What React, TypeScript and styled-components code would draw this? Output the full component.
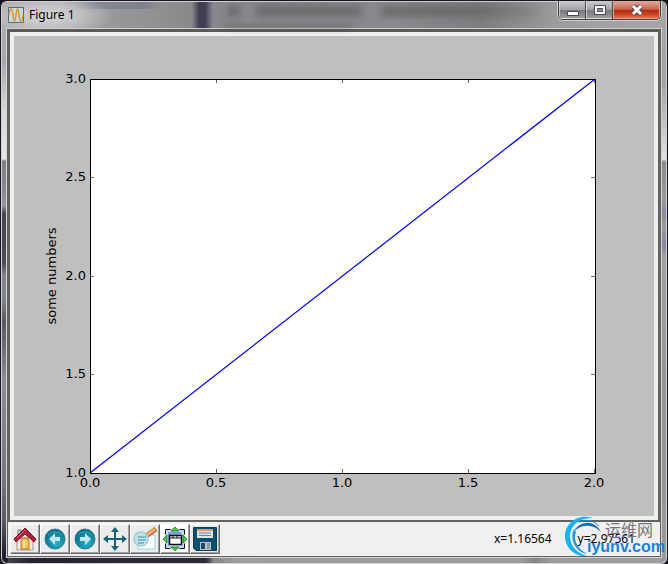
import React from "react";
import styled, { createGlobalStyle, css } from "styled-components";

const GlobalStyle = createGlobalStyle`
  * { box-sizing: border-box; }
  body { margin: 0; background: #15131c; font-family: "Noto Sans", "Noto Sans CJK SC", sans-serif; }
`;

const Window = styled.main`
  position: relative;
  display: flex;
  flex-direction: column;
  min-height: 100vh;
  padding: 0 5px 6px;
  border: 1px solid #17141d;
  border-radius: 7px;
  overflow: hidden;
  box-shadow: inset 0 0 0 1px #d4d4d6;
  background:
    linear-gradient(#b4b2b5, #a9a7ab 60px, #d9d6d8 110px, #e9e6e8 158px, #807e82 160px, #8d898e 190px,
      #9a969b 205px, #4b464b 212px, #504b50 262px, #84868e 275px, #7e828c 300px, #5a565b 320px,
      #8f8d92 380px, #77757a 480px, #5b5960 520px, #23222e 552px) left / 7px 100% no-repeat,
    linear-gradient(#aaa 0, #a3a3a3 80px, #c0c0c0 120px, #e4e4e4 158px, #8b8b8b 161px, #9a9a9a 200px,
      #8886a0 212px, #9c9c9c 225px, #8684a0 244px, #a0a0a0 255px, #959598 400px, #9a9a9a) right / 7px 100% no-repeat,
    linear-gradient(90deg, #4b4a55, #23222e 30px, #292b38 120px, #2b2b3a 205px, #8b8b8e 213px, #a0a0a0 240px, #9c9c9e 520px, #858587 534px, #9c9c9e 550px, #a0a0a0) bottom / 100% 8px no-repeat,
    #8b8b8e;
`;

const TitleBar = styled.header`
  display: flex;
  align-items: flex-start;
  height: 26px;
  margin: 1px -4px 0;
  padding-left: 6px;
  background:
    radial-gradient(ellipse 66px 22px at 46px 14px, rgba(230, 230, 232, .8), rgba(215, 215, 218, .55) 55%, transparent),
    linear-gradient(90deg, transparent 70px, rgba(75, 95, 120, .32) 90px, rgba(75, 95, 120, .32) 142px, transparent 160px) top / 100% 7px no-repeat,
    linear-gradient(90deg, #a8a8aa, #929294 150px, #88888b 190px, #403e52 197px, #403e52 203px, #88878c 211px, #8a8a8d 400px, #7d7d80 480px, #9c9c9e 555px, #a6a6a8);
`;

const AppIcon = styled.svg`
  width: 16px;
  height: 16px;
  margin-top: 5px;
`;

const Title = styled.h1`
  margin: 4px 0 0 5px;
  font-size: 12px;
  line-height: 17px;
  font-weight: 400;
  color: #000;
`;

const Ghost = styled.div`
  flex: 1;
  height: 26px;
  margin-left: 150px;
  overflow: hidden;
  filter: blur(3px);
  background:
    linear-gradient(90deg, rgba(70, 74, 72, .4) 8px, transparent 16px, transparent 24px, rgba(70, 74, 72, .42) 32px,
      rgba(70, 74, 72, .42) 130px, transparent 138px, transparent 148px, rgba(70, 74, 72, .42) 158px,
      rgba(70, 74, 72, .4) 220px, rgba(70, 74, 72, .15)) 3px 3px / 310px 12px no-repeat,
    linear-gradient(rgba(60, 66, 62, .5), rgba(60, 66, 62, .5)) 0 23px / 128px 5px no-repeat;
`;

const CaptionButtons = styled.div`
  display: flex;
  height: 19px;
  margin: -1px 5px 0 0;
  border: 1px solid #3f3c44;
  border-top: 0;
  border-radius: 0 0 5px 5px;
  box-shadow: 0 0 0 1px rgba(235, 235, 235, .65);
  overflow: hidden;
`;

const CaptionButton = styled.button<{ $close?: boolean }>`
  display: flex;
  align-items: center;
  justify-content: center;
  width: ${({ $close }) => ($close ? 47 : 27)}px;
  padding: 0;
  border: 1px solid rgba(255, 255, 255, .5);
  background: linear-gradient(#c5c5c7, #a3a3a6 48%, #77777b 50%, #9b9b9e);
  & + & { box-shadow: -1px 0 #4b484f; }
  ${({ $close }) => $close && css`
    border-color: #e4a190;
    background: linear-gradient(#dda296, #cb6650 46%, #b22a12 50%, #c93f20 75%, #dc7650);
  `}
  svg { display: block; }
`;

const Client = styled.section`
  display: flex;
  flex: 1;
  flex-direction: column;
  border: 1px solid #d2d2d2;
  background: #f0f0f0;
`;

const FigureFrame = styled.div`
  flex: 1;
  padding: 4px;
  border: solid #62645f;
  border-width: 3px 3px 2px;
  border-top-color: #595b57;
  box-shadow: inset 0 0 0 4px #f0f0f0;
  background: #bfbfbf;
`;

const Plot = styled.svg`
  display: block;
  width: 100%;
  height: auto;
  font-family: "DejaVu Sans", sans-serif;
  font-size: 13px;
  background: #bfbfbf;
`;

const BottomBar = styled.footer`
  display: flex;
  align-items: center;
  justify-content: space-between;
  height: 35px;
  padding: 0 25px 0 2px;
  border: solid #62645f;
  border-width: 0 1px 1px;
  background: #f0f0f0;
`;

const Tools = styled.nav`
  display: flex;
`;

const Tool = styled.button<{ $active?: boolean }>`
  display: flex;
  align-items: center;
  justify-content: center;
  width: 30px;
  height: 30px;
  padding: 0;
  border: 1px solid;
  border-color: #fff #696969 #696969 #fff;
  box-shadow: inset -1px -1px #a0a0a0;
  background: ${({ $active }) => ($active ? "#fff" : "#ececec")};
  svg { display: block; width: 24px; height: 24px; }
`;

const Coordinates = styled.output`
  display: flex;
  gap: 26px;
  font-size: 12px;
  line-height: 16px;
  color: #000;
`;

const Watermark = styled.aside`
  position: absolute;
  right: 4px;
  bottom: 4px;
  display: flex;
  width: 98px;
  height: 44px;
  pointer-events: none;
`;

const WatermarkRing = styled.svg`
  width: 42px;
  height: 42px;
  flex: none;
`;

const WatermarkText = styled.div`
  display: flex;
  flex-direction: column;
  margin-left: -20px;
  padding-top: 4px;
`;

const WatermarkName = styled.span`
  margin-left: 18px;
  font: 16px/18px "Noto Sans CJK SC", sans-serif;
  color: #77787d;
`;

const WatermarkSite = styled.span`
  font: bold 16px/18px "Liberation Sans", sans-serif;
  color: #1781d8;
`;

const LEFT = 76;
const RIGHT = 581;
const TOP = 43;
const BOTTOM = 437;

function Chart() {
  const xs = [0, 1, 2, 3, 4].map((i) => ({ x: LEFT + 126 * i, label: (i / 2).toFixed(1) }));
  const ys = [0, 1, 2, 3, 4].map((i) => ({ y: BOTTOM - Math.round(98.5 * i), label: (1 + i / 2).toFixed(1) }));
  return (
    <Plot viewBox="0 0 640 480" role="img" aria-label="Line chart of some numbers">
      <rect x={LEFT} y={TOP} width={RIGHT - LEFT} height={BOTTOM - TOP} fill="#fff" />
      <path d={`M${LEFT} ${BOTTOM}L${RIGHT} ${TOP}`} stroke="#00f" strokeWidth="1.2" fill="none" />
      {xs.map(({ x, label }) => (
        <g key={label}>
          <path d={`M${x + 0.5} ${BOTTOM}v-4M${x + 0.5} ${TOP}v4`} stroke="#000" strokeWidth="0.6" />
          <text x={x} y="451" textAnchor="middle">{label}</text>
        </g>
      ))}
      {ys.map(({ y, label }) => (
        <g key={label}>
          <path d={`M${LEFT} ${y + 0.5}h4M${RIGHT} ${y + 0.5}h-4`} stroke="#000" strokeWidth="0.6" />
          <text x="72" y={y + 4} textAnchor="end">{label}</text>
        </g>
      ))}
      <rect x={LEFT + 0.5} y={TOP + 0.5} width={RIGHT - LEFT} height={BOTTOM - TOP} fill="none" stroke="#000" />
      <text transform="translate(42 240) rotate(-90)" textAnchor="middle">some numbers</text>
    </Plot>
  );
}

const HomeIcon = () => (
  <svg viewBox="0 0 24 24">
    <path d="M4 11h16v12H4z" fill="#f7efe6" stroke="#9c8f88" />
    <path d="M5 3h3v6H5z" fill="#d6d6df" stroke="#7b6e77" />
    <path d="M8 22v-8q0-3 4-3t4 3v8z" fill="#ffc25b" stroke="#b86a1d" />
    <path d="M10 21v-7q0-1 2-1v8z" fill="#ffe39d" />
    <path d="M12 1L1 12l2 3 9-8 9 8 2-3z" fill="#b5213a" stroke="#721326" />
    <path d="M12 3L4 11" stroke="#d96173" />
  </svg>
);

const ArrowIcon = ({ forward }: { forward?: boolean }) => (
  <svg viewBox="0 0 24 24">
    <defs>
      <radialGradient id={forward ? "orbF" : "orbB"} cx=".6" cy=".7" r=".8">
        <stop offset="0" stopColor="#26b2cc" />
        <stop offset=".5" stopColor="#118aa5" />
        <stop offset="1" stopColor="#056078" />
      </radialGradient>
    </defs>
    <circle cx="12" cy="12" r="10" fill={`url(#${forward ? "orbF" : "orbB"})`} stroke="#287c91" />
    <path d="M5 8a8 6 0 0 1 14 0" stroke="#67bdcc" fill="none" opacity=".6" />
    <path
      d={forward ? "M18 12l-6-6v4H7v4h5v4z" : "M6 12l6-6v4h5v4h-5v4z"}
      fill="#c4e6ea"
    />
  </svg>
);

const PanIcon = () => (
  <svg viewBox="0 0 24 24">
    <path
      d="M12 0l4 5h-3v6h6V8l5 4-5 4v-3h-6v6h3l-4 5-4-5h3v-6H5v3l-5-4 5-4v3h6V5H8z"
      fill="#15627e"
    />
  </svg>
);

const ZoomIcon = () => (
  <svg viewBox="0 0 24 24">
    <path d="M5 8h17v14H5z" fill="#fff" stroke="#8fd3df" />
    <path d="M13 9l10-7" stroke="#b5682e" strokeWidth="5" />
    <path d="M14 8l8-6" stroke="#f7b069" strokeWidth="3" />
    <circle cx="8" cy="12" r="7" fill="#bde2e6" fillOpacity=".9" stroke="#a3cbd0" strokeWidth="1.5" />
    <path d="M5 10h8M5 13h8M5 16h6" stroke="#3a8ba8" />
  </svg>
);

const SubplotsIcon = () => (
  <svg viewBox="0 0 24 24">
    <path d="M2.500 2.500h19v19h-19z" fill="#c3d6f2" stroke="#111" strokeDasharray="10 9" strokeDashoffset="5" />
    <path d="M5 5h13v13H5z" fill="#7ba3dc" />
    <path d="M6.500 8.500h12v9h-12z" fill="#fff" stroke="#111" strokeWidth="1.500" />
    <path d="M7 11h11M10 9v2M14 9v2" fill="none" stroke="#111" />
    <path d="M12 0l4 4H8zM12 24l4-4H8zM0 12l4-4v8zM24 12l-4-4v8z" fill="#3ad23a" stroke="#176b18" strokeWidth=".7" />
  </svg>
);

const SaveIcon = () => (
  <svg viewBox="0 0 24 24">
    <path d="M.5.5h23v23H3l-2.500-2.500z" fill="#09506f" stroke="#083b54" />
    <path d="M4 2h16v9H4z" fill="#dce3e9" />
    <path d="M4 2h16v2H4z" fill="#ef9365" />
    <path d="M6 6h12M6 8.500h12" stroke="#70818e" />
    <path d="M7 15h11v8H7z" fill="#b9c3cc" />
    <path d="M8 16h4v6H8z" fill="#174b64" />
    <path d="M14 16h3v6h-3z" fill="#8f9aa6" />
  </svg>
);

const tools = [
  { label: "Home", icon: <HomeIcon /> },
  { label: "Back", icon: <ArrowIcon /> },
  { label: "Forward", icon: <ArrowIcon forward /> },
  { label: "Pan", icon: <PanIcon /> },
  { label: "Zoom", icon: <ZoomIcon /> },
  { label: "Subplots", icon: <SubplotsIcon />, active: true },
  { label: "Save", icon: <SaveIcon /> },
];

export default function App() {
  return (
    <>
      <GlobalStyle />
      <Window>
        <TitleBar>
          <AppIcon viewBox="0 0 16 16" aria-hidden="true">
            <path d="M.5.5h15v15H.5z" fill="#c5dbe0" stroke="#586c72" />
            <path d="M1 8C2 0 4 0 5 8s2 8 3 0 2-8 3 0 3 8 4 0" fill="none" stroke="#e08a12" strokeWidth="1.3" />
          </AppIcon>
          <Title>Figure 1</Title>
          <Ghost aria-hidden="true" />
          <CaptionButtons>
            <CaptionButton aria-label="Minimize">
              <svg width="14" height="14"><path d="M1.500 8.500h11v4h-11z" fill="#fff" stroke="#4c4958" /></svg>
            </CaptionButton>
            <CaptionButton aria-label="Maximize">
              <svg width="14" height="12">
                <path d="M1.500 1.500h11v9h-11z" fill="#fff" stroke="#4c4958" />
                <path d="M4.500 4.500h5v3h-5z" fill="#929296" stroke="#4c4958" />
              </svg>
            </CaptionButton>
            <CaptionButton aria-label="Close" $close>
              <svg width="14" height="12">
                <path d="M3 2l8 8M11 2l-8 8" stroke="#4c4958" strokeWidth="5" />
                <path d="M3 2l8 8M11 2l-8 8" stroke="#fff" strokeWidth="3" />
              </svg>
            </CaptionButton>
          </CaptionButtons>
        </TitleBar>
        <Client>
          <FigureFrame>
            <Chart />
          </FigureFrame>
          <BottomBar>
            <Tools aria-label="Figure tools">
              {tools.map(({ label, icon, active }) => (
                <Tool key={label} aria-label={label} $active={active}>{icon}</Tool>
              ))}
            </Tools>
            <Coordinates>
              <span>x=1.16564</span>
              <span>y=2.97561</span>
            </Coordinates>
          </BottomBar>
        </Client>
        <Watermark>
          <WatermarkRing viewBox="0 0 42 42" aria-hidden="true">
            <path d="M28 2C12-3 0 8 0 20C0 31 9 41 22 40C12 37 5 30 5 20C5 10 14 1 28 2z" fill="#14b4f4" />
            <path d="M9 15C15 5 29 3 36 16C28 8 18 8 9 15z" fill="#1c6cb8" />
            <path d="M9 13C4 24 11 36 22 38C12 32 8 24 11 16z" fill="#2a94de" />
            <path d="M14 6Q26 1 34 10" fill="none" stroke="#1a86d0" />
          </WatermarkRing>
          <WatermarkText>
            <WatermarkName>运维网</WatermarkName>
            <WatermarkSite>iyunv.com</WatermarkSite>
          </WatermarkText>
        </Watermark>
      </Window>
    </>
  );
}
